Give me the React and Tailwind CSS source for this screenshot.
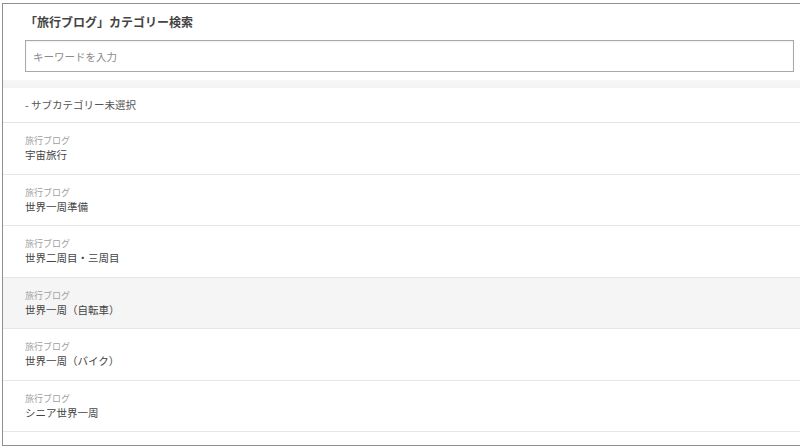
const rows = [
  { main: '宇宙旅行' },
  { main: '世界一周準備' },
  { main: '世界二周目・三周目' },
  { main: '世界一周（自転車）', active: true },
  { main: '世界一周（バイク）' },
  { main: 'シニア世界一周' },
];

export default function App() {
  return (
    <div
      className="w-[800px] h-[448px] bg-white overflow-hidden pt-[3px] pl-[2px]"
      style={{ fontFamily: '"Noto Sans CJK JP", "Noto Sans", sans-serif' }}
    >
      <div className="w-[820px] h-[443px] border border-[#8f8f8f] bg-white flex flex-col">
        {/* header */}
        <div className="pl-[22px] pt-[9px]">
          <h2 className="text-[12px] leading-[18px] font-bold text-[#444]">「旅行ブログ」カテゴリー検索</h2>
          <input
            type="text"
            placeholder="キーワードを入力"
            className="mt-[9px] w-[769px] h-[32px] border border-[#a8a8a8] px-[7px] text-[10.5px] text-[#333] placeholder:text-[#8a8a8a] outline-none shadow-[inset_0_1px_2px_rgba(0,0,0,0.06)]"
          />
        </div>
        <div className="mt-[8px] h-[8px] bg-gradient-to-b from-[#f7f7f7] to-[#f3f3f3]" />

        {/* list */}
        <div className="h-[35px] border-b border-[#e3e3e3] pl-[22px] flex items-center text-[10.5px] text-[#555]">
          - サブカテゴリー未選択
        </div>
        {rows.map((row, i) => (
          <div
            key={i}
            className={`h-[51.5px] border-b border-[#e6e6e6] pl-[22px] pt-[12px] ${row.active ? 'bg-[#f5f5f5]' : 'bg-white'}`}
          >
            <p className="text-[9px] leading-[12px] text-[#a0a0a0]">旅行ブログ</p>
            <p className="text-[10.5px] leading-[16px] text-[#444]">{row.main}</p>
          </div>
        ))}
      </div>
    </div>
  );
}
